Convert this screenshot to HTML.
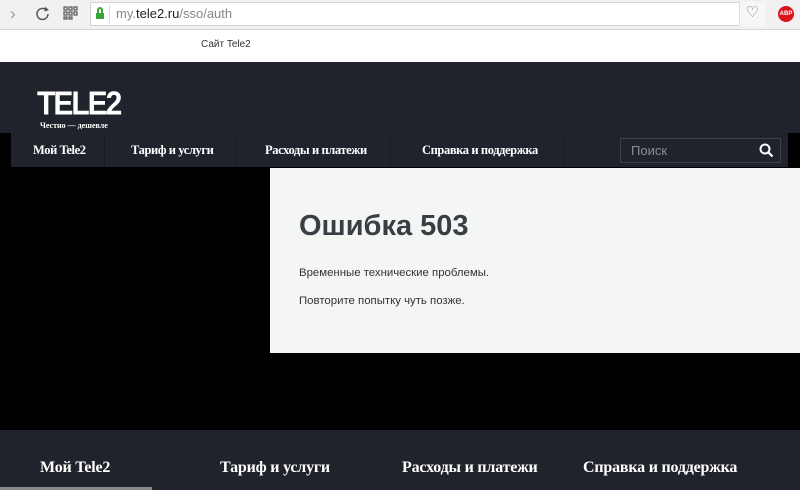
<!DOCTYPE html>
<html><head><meta charset="utf-8"><style>
*{margin:0;padding:0;box-sizing:border-box}
body{width:800px;height:490px;overflow:hidden;background:#000;font-family:"Liberation Sans",sans-serif;position:relative}
.a{position:absolute}
.nav{font-family:"Liberation Serif",serif;font-weight:bold;color:#fff;font-size:12.5px;top:143px;letter-spacing:-0.4px}
.ft{font-family:"Liberation Serif",serif;font-weight:bold;color:#fff;font-size:16px;top:459px;letter-spacing:-0.2px}
.sep{top:133px;width:1px;height:34px;background:#171a20}
</style></head><body>
<div class="a" style="left:0;top:0;width:800px;height:30px;background:#f1f1f1;border-bottom:1px solid #d6d6d6"></div>
<div class="a" style="left:10px;top:4px;color:#999;font-size:17px">&#x203A;</div>
<svg class="a" style="left:34px;top:5px" width="18" height="18" viewBox="0 0 18 18"><path d="M14 9a5.5 5.5 0 1 1-2-4.3" fill="none" stroke="#555" stroke-width="1.5"/><path d="M11 2.5l2.5 2.3-3 1" fill="none" stroke="#555" stroke-width="1.5"/></svg>
<svg class="a" style="left:63px;top:6px" width="16" height="14"><g fill="none" stroke="#555" stroke-width="1.2"><rect x="1" y="1" width="3" height="3"/><rect x="6" y="1" width="3" height="3"/><rect x="11" y="1" width="3" height="3"/><rect x="1" y="6" width="3" height="3"/><rect x="6" y="6" width="3" height="3"/><rect x="11" y="6" width="3" height="3"/><rect x="1" y="11" width="3" height="2"/><rect x="6" y="11" width="3" height="2"/></g></svg>
<div class="a" style="left:90px;top:2px;width:675px;height:24px;background:#fff;border:1px solid #d4d4d4"></div>
<div class="a" style="left:96px;top:7px;width:8px;height:11px"><div style="width:6px;height:6px;border:2px solid #3aa73a;border-bottom:none;border-radius:3px 3px 0 0;margin-left:1px"></div><div style="width:8px;height:6px;background:#3aa73a"></div></div>
<div class="a" style="left:109px;top:5px;width:1px;height:18px;background:#ddd"></div>
<div class="a" style="left:116px;top:6px;font-size:13px;color:#888">my.<span style="color:#222">tele2.ru</span>/sso/auth</div>
<div class="a" style="left:739px;top:2px;width:26px;height:24px;border-left:1px solid #ddd;background:#f7f7f7;text-align:center;color:#777;font-size:15px;line-height:22px">&#x2661;</div>
<div class="a" style="left:778px;top:6px;width:16px;height:16px;border-radius:50%;background:#d9141b;color:#fff;font-size:6px;font-weight:bold;text-align:center;line-height:16px">ABP</div>
<div class="a" style="left:0;top:30px;width:800px;height:32px;background:#fff"></div>
<div class="a" style="left:201px;top:39px;font-size:10px;color:#333">Сайт Tele2</div>
<div class="a" style="left:0;top:62px;width:800px;height:71px;background:#20232b"></div>
<div class="a" style="left:37px;top:88px;font-family:'Liberation Sans',sans-serif;font-weight:900;color:#fff;font-size:30px;letter-spacing:-2px;line-height:1;transform:scaleY(1.1);transform-origin:top left">TELE2</div>
<div class="a" style="left:40px;top:121px;font-family:'Liberation Serif',serif;font-weight:bold;color:#fff;font-size:8px">Честно — дешевле</div>
<div class="a" style="left:11px;top:133px;width:777px;height:34px;background:#20232b"></div>
<div class="a sep" style="left:104px"></div><div class="a sep" style="left:236px"></div><div class="a sep" style="left:390px"></div><div class="a sep" style="left:563px"></div>
<div class="a nav" style="left:33px">Мой Tele2</div>
<div class="a nav" style="left:131px">Тариф и услуги</div>
<div class="a nav" style="left:265px">Расходы и платежи</div>
<div class="a nav" style="left:422px">Справка и поддержка</div>
<div class="a" style="left:620px;top:138px;width:161px;height:25px;border:1px solid #3d4149;background:#20232b"></div>
<div class="a" style="left:631px;top:143px;font-size:13px;color:#8b8e94">Поиск</div>
<svg class="a" style="left:759px;top:143px" width="15" height="15"><circle cx="6" cy="6" r="4.5" fill="none" stroke="#fff" stroke-width="2"/><path d="M9.5 9.5l4 4" stroke="#fff" stroke-width="2.2"/></svg>
<div class="a" style="left:270px;top:168px;width:530px;height:185px;background:#f4f5f5"></div>
<div class="a" style="left:299px;top:210px;font-family:'Liberation Sans',sans-serif;font-weight:bold;font-size:29px;color:#3a3d44">Ошибка 503</div>
<div class="a" style="left:299px;top:267px;font-size:11.4px;color:#333">Временные технические проблемы.</div>
<div class="a" style="left:299px;top:295px;font-size:11.4px;color:#333">Повторите попытку чуть позже.</div>
<div class="a" style="left:0;top:430px;width:800px;height:60px;background:#20232b"></div>
<div class="a ft" style="left:40px">Мой Tele2</div>
<div class="a ft" style="left:220px">Тариф и услуги</div>
<div class="a ft" style="left:402px">Расходы и платежи</div>
<div class="a ft" style="left:583px">Справка и поддержка</div>
<div class="a" style="left:0;top:487px;width:152px;height:3px;background:#888"></div>
</body></html>
